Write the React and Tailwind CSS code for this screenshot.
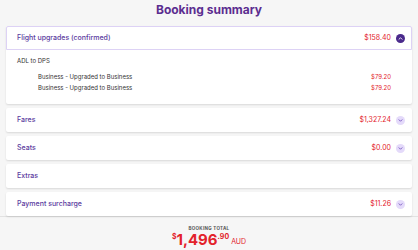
import React from 'react';

function Chevron({ open }) {
  return open ? (
    <span className="w-[9px] h-[9px] rounded-full bg-[#4a2a8c] flex items-center justify-center">
      <svg width="5" height="5" viewBox="0 0 10 10" fill="none">
        <path d="M2 6.5L5 3.5L8 6.5" stroke="white" strokeWidth="1.8" strokeLinecap="round" strokeLinejoin="round" />
      </svg>
    </span>
  ) : (
    <span className="w-[9px] h-[9px] rounded-full bg-[#e4dafa] flex items-center justify-center">
      <svg width="5" height="5" viewBox="0 0 10 10" fill="none">
        <path d="M2 3.5L5 6.5L8 3.5" stroke="#6a48b8" strokeWidth="1.6" strokeLinecap="round" strokeLinejoin="round" />
      </svg>
    </span>
  );
}

function Row({ label, price }) {
  return (
    <div className="h-[24px] bg-white rounded-[2px] shadow-[0_1px_2px_rgba(0,0,0,0.12)] flex items-center justify-between pl-[11px] pr-[7px]">
      <span className="text-[7px] font-medium text-[#5a3a9e]">{label}</span>
      {price && (
        <div className="flex items-center gap-[5px]">
          <span className="text-[7px] text-[#e3222b]">{price}</span>
          <Chevron />
        </div>
      )}
    </div>
  );
}

export default function App() {
  const items = [
    { label: 'Fares', price: '$1,327.24' },
    { label: 'Seats', price: '$0.00' },
    { label: 'Extras' },
    { label: 'Payment surcharge', price: '$11.26' },
  ];

  return (
    <div className="w-[418px] h-[250px] bg-[#f6f6f6] overflow-hidden font-['Inter',sans-serif]">
      <h1 className="text-center text-[12px] leading-[18px] font-bold text-[#5b2d90] pt-[1px]">Booking summary</h1>

      <div className="px-[6px] pt-[7px] flex flex-col gap-[4px]">
        {/* expanded card */}
        <div className="bg-white rounded-[2px] shadow-[0_1px_2px_rgba(0,0,0,0.12)]">
          <div className="h-[24px] border border-[#ddd2f5] rounded-t-[2px] flex items-center justify-between pl-[10px] pr-[6px]">
            <span className="text-[7px] font-medium text-[#5a3a9e]">Flight upgrades (confirmed)</span>
            <div className="flex items-center gap-[5px]">
              <span className="text-[7px] text-[#e3222b]">$158.40</span>
              <Chevron open />
            </div>
          </div>
          <div className="pl-[11px] pr-[21px] pt-[6px] pb-[11px] text-[6px] text-[#333]">
            <div className="leading-[9px]">ADL to DPS</div>
            <div className="mt-[6px] pl-[21px] flex justify-between leading-[11px]">
              <span>Business - Upgraded to Business</span>
              <span className="text-[#e3222b]">$79.20</span>
            </div>
            <div className="pl-[21px] flex justify-between leading-[11px]">
              <span>Business - Upgraded to Business</span>
              <span className="text-[#e3222b]">$79.20</span>
            </div>
          </div>
        </div>

        {items.map((it) => (
          <Row key={it.label} label={it.label} price={it.price} />
        ))}
      </div>

      <div className="border-t border-[#e2e2e2] pt-[8px] text-center">
        <div className="text-[4.5px] font-bold tracking-[0.3px] text-[#555] leading-[7px]">BOOKING TOTAL</div>
        <div className="text-[#e3222b] h-[16px] flex justify-center items-start">
          <span className="text-[7px] font-bold leading-[9px]">$</span>
          <span className="text-[15px] font-bold leading-[16px]">1,496</span>
          <span className="text-[7px] font-bold leading-[9px]">.90</span>
          <span className="text-[7px] ml-[2px] leading-[9px] self-end mb-[2px]">AUD</span>
        </div>
      </div>
    </div>
  );
}
